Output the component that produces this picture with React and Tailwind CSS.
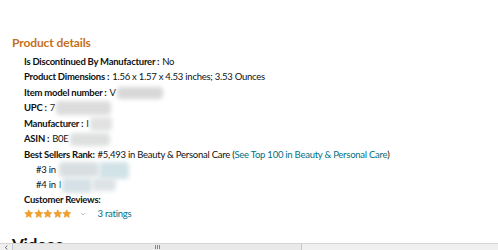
const FONT = "font-['Lato',sans-serif]";

function Blur({ className }) {
  return <span className={`inline-block blur-[2px] rounded-sm ${className}`} />;
}

function Row({ label, children }) {
  return (
    <div className="h-[15.5px] flex items-center whitespace-nowrap">
      <span className="font-bold text-[#0f1111]">{label}</span>
      <span className="ml-[3px] text-[#0f1111]">{children}</span>
    </div>
  );
}

function Star() {
  return (
    <svg viewBox="0 0 24 24" className="w-[9.5px] h-[9.5px]">
      <path
        d="M12 1.8l3.1 6.6 7.2.9-5.3 5 1.4 7.1L12 17.9l-6.4 3.5 1.4-7.1-5.3-5 7.2-.9z"
        fill="#f3a12a"
        stroke="#d9871a"
        strokeWidth="1"
      />
    </svg>
  );
}

export default function App() {
  return (
    <div className={`relative w-[498px] h-[250px] overflow-hidden bg-white ${FONT}`}>
      <div className="pl-[12px] pt-[36px]">
        <h2 className="text-[12px] leading-[14px] font-bold tracking-[-0.1px] text-[#c4701c]">Product details</h2>

        <div className="pl-[12px] mt-[4px] text-[9.5px] tracking-[-0.25px]">
          <Row label="Is Discontinued By Manufacturer :">No</Row>
          <Row label="Product Dimensions :">1.56 x 1.57 x 4.53 inches; 3.53 Ounces</Row>
          <Row label="Item model number :">
            <span className="inline-flex items-center">
              V<Blur className="ml-[1px] w-[46px] h-[12px] bg-[#d8d8d8]" />
            </span>
          </Row>
          <Row label="UPC :">
            <span className="inline-flex items-center">
              7<Blur className="ml-[1px] w-[55px] h-[14px] bg-[#dcdcdc]" />
            </span>
          </Row>
          <Row label="Manufacturer :">
            <span className="inline-flex items-center">
              I<Blur className="ml-[1px] w-[22px] h-[14px] bg-[#e2e2e2]" />
            </span>
          </Row>
          <Row label="ASIN :">
            <span className="inline-flex items-center">
              B0E<Blur className="ml-[1px] w-[40px] h-[13px] bg-[#dee0e0]" />
            </span>
          </Row>
          <div className="h-[15.5px] flex items-center whitespace-nowrap">
            <span className="font-bold text-[#0f1111]">Best Sellers Rank:</span>
            <span className="ml-[3px] text-[#0f1111]">#5,493 in Beauty &amp; Personal Care (</span>
            <span className="text-[#007185]">See Top 100 in Beauty &amp; Personal Care</span>
            <span className="text-[#0f1111]">)</span>
          </div>
          <div className="pl-[12px]">
            <div className="h-[15px] flex items-center whitespace-nowrap text-[#0f1111]">
              #3 in
              <span className="inline-flex ml-[3px]">
                <Blur className="w-[40px] h-[15px] bg-[#d9dfe1]" />
                <Blur className="w-[30px] h-[17px] bg-[#d2e3e8]" />
              </span>
            </div>
            <div className="h-[15.5px] flex items-center whitespace-nowrap text-[#0f1111]">
              #4 in <span className="text-[#007185] ml-[3px]">I</span>
              <span className="inline-flex ml-[1px]">
                <Blur className="w-[30px] h-[15px] bg-[#d5e1e6]" />
                <Blur className="w-[24px] h-[13px] bg-[#dee3e6]" />
              </span>
            </div>
          </div>
          <div className="h-[15px] flex items-center font-bold text-[#0f1111]">Customer Reviews:</div>
          <div className="h-[12px] flex items-center">
            <div className="flex">
              <Star />
              <Star />
              <Star />
              <Star />
              <Star />
            </div>
            <svg viewBox="0 0 10 10" className="ml-[8px] w-[6px] h-[6px]">
              <path d="M2 3.5l3 3 3-3" fill="none" stroke="#999" strokeWidth="1.2" />
            </svg>
            <span className="ml-[12px] text-[#007185]">3 ratings</span>
          </div>
        </div>

        <h2 className="mt-[15px] text-[17px] leading-[20px] font-bold tracking-[-0.2px] text-[#0f1111]">Videos</h2>
      </div>

      {/* horizontal scrollbar */}
      <div className="absolute left-0 right-0 bottom-0 h-[7px] flex items-stretch bg-[#f0f0f0] border-t border-[#d4d4d4]">
        <div className="w-[12px] flex items-center justify-center">
          <svg viewBox="0 0 6 6" className="w-[5px] h-[5px]">
            <path d="M4 0.8L1.5 3L4 5.2" fill="none" stroke="#555" strokeWidth="1" />
          </svg>
        </div>
        <div className="w-[290px] bg-[#e9e9e9] border-x border-[#c8c8c8] flex items-center justify-center gap-[1px]">
          <span className="w-[1px] h-[4px] bg-[#888]" />
          <span className="w-[1px] h-[4px] bg-[#888]" />
          <span className="w-[1px] h-[4px] bg-[#888]" />
        </div>
        <div className="flex-1" />
      </div>
    </div>
  );
}
